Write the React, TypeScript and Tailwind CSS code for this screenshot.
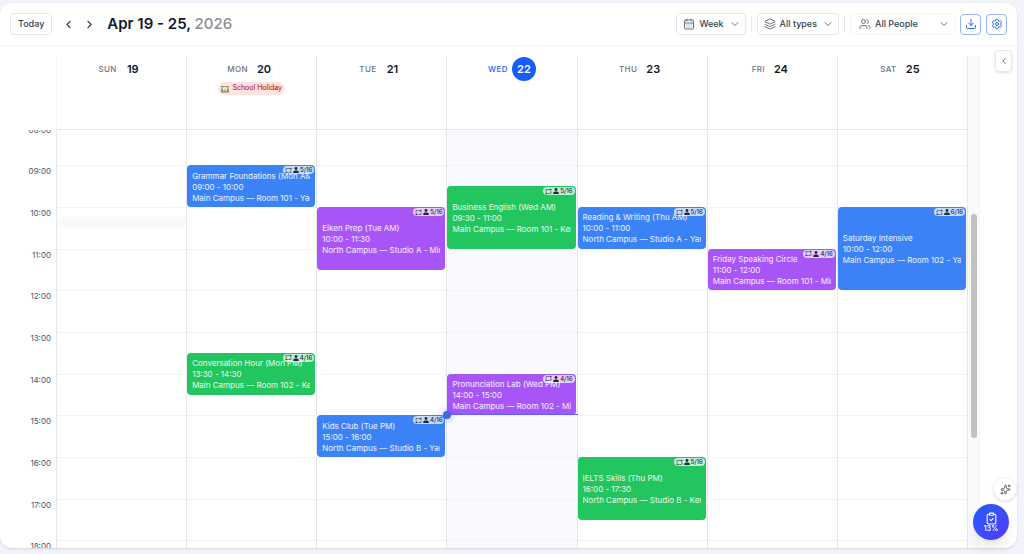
import React from "react";
import {
  CalendarDays,
  ChevronDown,
  ChevronLeft,
  ChevronRight,
  ClipboardCheck,
  Download,
  Layers,
  Settings,
  Sparkles,
  Users,
} from "lucide-react";

type Tone = "blue" | "green" | "purple";

interface Lesson {
  title: string;
  time: string;
  place: string;
  seats: string;
  tone: Tone;
  start: number;
  end: number;
}

interface Day {
  name: string;
  date: number;
  today?: boolean;
  holiday?: string;
  hoveredSlot?: number;
  lessons: Lesson[];
}

const FIRST_HOUR = 7;
const HOURS = Array.from({ length: 12 }, (_, i) => FIRST_HOUR + i);

const tones: Record<Tone, string> = {
  blue: "bg-[#3b82f6]",
  green: "bg-[#22c55e]",
  purple: "bg-[#a855f7]",
};

const days: Day[] = [
  { name: "SUN", date: 19, hoveredSlot: 10.25, lessons: [] },
  {
    name: "MON",
    date: 20,
    holiday: "School Holiday",
    lessons: [
      { title: "Grammar Foundations (Mon AM)", time: "09:00 - 10:00", place: "Main Campus — Room 101 - Yamada", seats: "5/16", tone: "blue", start: 9, end: 10 },
      { title: "Conversation Hour (Mon PM)", time: "13:30 - 14:30", place: "Main Campus — Room 102 - Kenji", seats: "4/16", tone: "green", start: 13.5, end: 14.5 },
    ],
  },
  {
    name: "TUE",
    date: 21,
    lessons: [
      { title: "Eiken Prep (Tue AM)", time: "10:00 - 11:30", place: "North Campus — Studio A - Mina", seats: "5/16", tone: "purple", start: 10, end: 11.5 },
      { title: "Kids Club (Tue PM)", time: "15:00 - 16:00", place: "North Campus — Studio B - Yamada", seats: "4/16", tone: "blue", start: 15, end: 16 },
    ],
  },
  {
    name: "WED",
    date: 22,
    today: true,
    lessons: [
      { title: "Business English (Wed AM)", time: "09:30 - 11:00", place: "Main Campus — Room 101 - Kenji", seats: "5/16", tone: "green", start: 9.5, end: 11 },
      { title: "Pronunciation Lab (Wed PM)", time: "14:00 - 15:00", place: "Main Campus — Room 102 - Mina", seats: "4/16", tone: "purple", start: 14, end: 15 },
    ],
  },
  {
    name: "THU",
    date: 23,
    lessons: [
      { title: "Reading & Writing (Thu AM)", time: "10:00 - 11:00", place: "North Campus — Studio A - Yamada", seats: "5/16", tone: "blue", start: 10, end: 11 },
      { title: "IELTS Skills (Thu PM)", time: "16:00 - 17:30", place: "North Campus — Studio B - Kenji", seats: "5/16", tone: "green", start: 16, end: 17.5 },
    ],
  },
  {
    name: "FRI",
    date: 24,
    lessons: [
      { title: "Friday Speaking Circle", time: "11:00 - 12:00", place: "Main Campus — Room 101 - Mina", seats: "4/16", tone: "purple", start: 11, end: 12 },
    ],
  },
  {
    name: "SAT",
    date: 25,
    lessons: [
      { title: "Saturday Intensive", time: "10:00 - 12:00", place: "Main Campus — Room 102 - Yamada", seats: "6/16", tone: "blue", start: 10, end: 12 },
    ],
  },
];

// Each grid row of a day column stands for a quarter of an hour.
const rowOf = (hour: number) => (hour - FIRST_HOUR) * 4 + 1;

function RepeatIcon() {
  return (
    <svg viewBox="2 2 20 20" className="size-[7px]" fill="currentColor" aria-hidden="true">
      <path d="M6.500 17.800v2.700L2.500 17l4-3.500v2.500H18v-4h2v5.800zM17.500 6.200V3.500l4 3.500-4 3.500V8H6v4H4V6.200z" />
    </svg>
  );
}

function PersonIcon() {
  return (
    <svg viewBox="0 0 12 12" className="size-[6px]" fill="currentColor" aria-hidden="true">
      <circle cx="6" cy="3" r="2.8" />
      <path d="M0.5 12V9.8C0.5 7.8 2.5 6.8 6 6.8s5.500 1 5.500 3V12z" />
    </svg>
  );
}

function SchoolIcon() {
  return (
    <svg viewBox="0 0 16 16" className="size-2" aria-hidden="true">
      <rect x="0" y="2" width="16" height="12" fill="#c9c09c" />
      <path d="M0 2h16v2H0z" fill="#9a8f7a" />
      <path d="M4 6l4-3 4 3v6H4z" fill="#f3e6b8" />
      <path d="M7 8h2v4H7z" fill="#7aa7b8" />
      <path d="M0 12h16v3H0z" fill="#7f9a68" />
      <circle cx="2" cy="10" r="2" fill="#5f9a5a" />
      <circle cx="14" cy="10" r="2" fill="#5f9a5a" />
    </svg>
  );
}

function LessonCard({ lesson }: { lesson: Lesson }) {
  return (
    <button
      type="button"
      className={`relative z-10 col-start-1 mr-px flex min-w-0 flex-col justify-center overflow-hidden rounded-[4px] px-[5px] pt-[2px] text-left text-[8px] leading-[11px] text-white/90 ${tones[lesson.tone]}`}
      style={{ gridRow: `${rowOf(lesson.start)} / ${rowOf(lesson.end)}` }}
    >
      <span className="block w-full overflow-hidden whitespace-nowrap">{lesson.title}</span>
      <span className="block w-full overflow-hidden whitespace-nowrap">{lesson.time}</span>
      <span className="block w-full overflow-hidden whitespace-nowrap">{lesson.place}</span>
      <span className="absolute top-px right-px flex h-2 items-center gap-px rounded-full bg-white/70 px-[2px] text-[6px] leading-[8px] font-medium text-gray-800">
        <RepeatIcon />
        <PersonIcon />
        {lesson.seats}
      </span>
    </button>
  );
}

function FilterButton({ icon, label, wide }: { icon: React.ReactNode; label: string; wide?: boolean }) {
  return (
    <button
      type="button"
      className={`flex h-[22px] items-center gap-1 rounded-[4px] border bg-white pr-1 text-[9px] font-medium text-gray-700 ${wide ? "w-[105px] border-gray-100 pl-2" : "border-gray-200 pl-[6px]"}`}
    >
      {icon}
      <span className="flex-1 text-left">{label}</span>
      <ChevronDown className="ml-px size-3 text-gray-500" />
    </button>
  );
}

function Toolbar() {
  return (
    <header className="flex h-[43px] shrink-0 items-center border-b border-gray-100 px-[10px]">
      <button type="button" className="h-[22px] rounded-[4px] border border-gray-200 px-[7px] text-[9px] font-medium text-gray-700">
        Today
      </button>
      <button type="button" aria-label="Previous week" className="ml-[10px] text-gray-700">
        <ChevronLeft className="size-[13px]" />
      </button>
      <button type="button" aria-label="Next week" className="ml-2 text-gray-700">
        <ChevronRight className="size-[13px]" />
      </button>
      <h1 className="ml-[11px] text-[15px] font-semibold text-gray-900">
        Apr 19 - 25, <span className="font-medium text-[#8a8d94]">2026</span>
      </h1>
      <div className="ml-auto flex items-center gap-[5px]">
        <FilterButton icon={<CalendarDays className="size-3 text-gray-500" />} label="Week" />
        <span className="h-4 w-px bg-gray-200" />
        <FilterButton icon={<Layers className="size-3 text-gray-500" />} label="All types" />
        <span className="h-4 w-px bg-gray-200" />
        <FilterButton icon={<Users className="size-3 text-gray-500" />} label="All People" wide />
        <button type="button" aria-label="Download" className="flex size-[21px] items-center justify-center rounded-[4px] border border-[#93b4f8] text-[#2f66ee]">
          <Download className="size-3" />
        </button>
        <button type="button" aria-label="Settings" className="flex size-[21px] items-center justify-center rounded-[4px] border border-[#93b4f8] text-[#2f66ee]">
          <Settings className="size-3" />
        </button>
      </div>
    </header>
  );
}

function DayHeading({ day }: { day: Day }) {
  return (
    <div className="flex min-w-0 flex-1 flex-col items-center border-r border-gray-200">
      <div className="flex h-[26px] items-center gap-1">
        <span className={`text-[8px] font-medium tracking-wider ${day.today ? "text-blue-600" : "text-gray-500"}`}>{day.name}</span>
        <span
          className={`flex size-6 items-center justify-center rounded-full text-[11px] font-semibold ${day.today ? "bg-[#155dfc] text-white" : "text-gray-900"}`}
        >
          {day.date}
        </span>
      </div>
      {day.holiday && (
        <span className="flex h-[13px] items-center gap-[3px] rounded-full bg-red-100 px-[3px] text-[7px] text-red-800">
          <SchoolIcon />
          {day.holiday}
        </span>
      )}
    </div>
  );
}

function DayColumn({ day }: { day: Day }) {
  return (
    <div
      className={`relative grid min-w-0 flex-1 grid-cols-1 grid-rows-[repeat(48,minmax(0,1fr))] border-r border-gray-200 ${day.today ? "bg-[#f8faff]" : ""}`}
    >
      {HOURS.map((hour) => (
        <div key={hour} className="col-start-1 border-t border-gray-100" style={{ gridRow: `${rowOf(hour)} / span 4` }} />
      ))}
      {day.hoveredSlot !== undefined && (
        <div className="col-start-1 bg-gray-50" style={{ gridRow: `${rowOf(day.hoveredSlot)} / span 1` }} />
      )}
      {day.lessons.map((lesson) => (
        <LessonCard key={lesson.title} lesson={lesson} />
      ))}
      {day.today && (
        <div className="relative z-20 col-start-1 -mr-px h-0" style={{ gridRow: `${rowOf(15)} / span 1` }}>
          <span className="absolute inset-x-0 -top-px h-px bg-indigo-500" />
          <span className="absolute -top-1 -left-1 size-2 rounded-full bg-[#4464ee] shadow-[0_0_6px_2px_rgba(79,70,229,0.25)]" />
        </div>
      )}
    </div>
  );
}

export default function App() {
  return (
    <div className="flex h-screen flex-col overflow-hidden bg-[#f2f3fb] pt-[3px] pr-[7px] pb-[6px] font-[Inter,sans-serif]">
      <main className="relative flex min-h-0 flex-1 flex-col overflow-hidden rounded-xl bg-white shadow-sm">
        <Toolbar />
        <div className="flex min-h-0 flex-1">
          <section aria-label="Week calendar" className="flex min-w-0 flex-1 flex-col pt-[10px]">
            <div className="flex h-[74px] shrink-0">
              <div className="w-[57px] shrink-0 border-r border-gray-100" />
              <div className="flex min-w-0 flex-1 border-b border-gray-200">
                {days.map((day) => (
                  <DayHeading key={day.name} day={day} />
                ))}
              </div>
              <div className="w-3 shrink-0 border-r border-gray-100 bg-gray-50" />
            </div>
            <div className="flex min-h-0 flex-1">
              <div className="flex min-w-0 flex-1 items-start overflow-hidden">
                <div className="-mt-12 grid h-[500px] w-[57px] shrink-0 grid-rows-12 border-r border-gray-200">
                  {HOURS.map((hour) => (
                    <span key={hour} className="pr-[5px] text-right text-[8px] leading-[12px] text-gray-600">
                      {String(hour).padStart(2, "0")}:00
                    </span>
                  ))}
                </div>
                <div className="-mt-12 flex h-[500px] min-w-0 flex-1">
                  {days.map((day) => (
                    <DayColumn key={day.name} day={day} />
                  ))}
                </div>
              </div>
              <div className="flex w-3 shrink-0 flex-col items-center border-r border-gray-100 bg-gray-50 pt-[84px]">
                <span className="h-[224px] w-[6px] rounded-full bg-[#c1c1c1]" />
              </div>
            </div>
          </section>
          <aside className="flex w-[37px] shrink-0 justify-end pt-1 pr-[5px]">
            <button
              type="button"
              aria-label="Open side panel"
              className="flex h-[22px] w-[17px] items-center justify-center rounded-[4px] border border-gray-200 text-gray-600 shadow-sm"
            >
              <ChevronLeft className="size-[10px]" />
            </button>
          </aside>
        </div>
      </main>
      <button
        type="button"
        aria-label="Assistant"
        className="fixed right-[7px] bottom-[53px] flex size-6 items-center justify-center rounded-full border border-gray-100 bg-white text-gray-600 shadow-sm"
      >
        <Sparkles className="size-[11px]" />
      </button>
      <button
        type="button"
        className="fixed right-[15px] bottom-[14px] flex size-9 flex-col items-center justify-center rounded-full bg-linear-to-br from-blue-600 to-indigo-600 text-[7px] leading-[8px] font-semibold text-white shadow-lg"
      >
        <ClipboardCheck className="size-[13px]" />
        13%
      </button>
    </div>
  );
}
